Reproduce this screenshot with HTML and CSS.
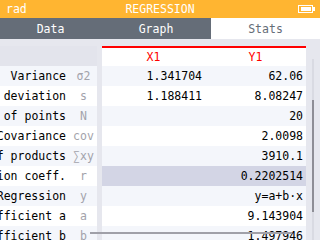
FILE: index.html
```html
<!DOCTYPE html>
<html lang="en">
<head>
  <meta charset="UTF-8" />
  <title>Regression</title>
  <link rel="stylesheet" href="styles.css">
</head>
<body>
  <div class="titlebar">
    <span class="unit">rad</span>
    <span class="title">REGRESSION</span>
    <span class="battery">
      <svg width="18" height="8" viewBox="0 0 18 8">
        <rect x="0.5" y="0.5" width="14" height="7" fill="none" stroke="#fff"/>
        <rect x="3" y="2" width="10" height="4" fill="#fff"/>
        <rect x="15" y="2" width="2" height="4" fill="#fff"/>
      </svg>
    </span>
  </div>

  <div class="tabs">
    <div class="tab tab-data">Data</div>
    <div class="tab tab-graph">Graph</div>
    <div class="tab tab-stats active">Stats</div>
  </div>

  <div class="content">
    <div class="labels">
      <div class="label-head"></div>
      <div class="lrow odd"><span class="name">Variance</span><span class="sym">σ2</span></div>
      <div class="lrow"><span class="name">Standard deviation</span><span class="sym">s</span></div>
      <div class="lrow odd"><span class="name">Number of points</span><span class="sym">N</span></div>
      <div class="lrow"><span class="name">Covariance</span><span class="sym">cov</span></div>
      <div class="lrow odd"><span class="name">Sum of products</span><span class="sym">∑xy</span></div>
      <div class="lrow"><span class="name">Correlation coeff.</span><span class="sym">r</span></div>
      <div class="lrow odd"><span class="name">Regression</span><span class="sym">y</span></div>
      <div class="lrow"><span class="name">Coefficient a</span><span class="sym">a</span></div>
      <div class="lrow odd"><span class="name">Coefficient b</span><span class="sym">b</span></div>
    </div>

    <div class="table">
      <div class="head">X1</div><div class="head">Y1</div>
      <div class="cell odd">1.341704</div><div class="cell odd">62.06</div>
      <div class="cell">1.188411</div><div class="cell">8.08247</div>
      <div class="cell odd"></div><div class="cell odd">20</div>
      <div class="cell"></div><div class="cell">2.0098</div>
      <div class="cell odd"></div><div class="cell odd">3910.1</div>
      <div class="cell selected"></div><div class="cell selected">0.2202514</div>
      <div class="cell odd"></div><div class="cell odd">y=a+b·x</div>
      <div class="cell"></div><div class="cell">9.143904</div>
      <div class="cell odd"></div><div class="cell odd">1.497946</div>
    </div>

    <div class="vscroll"><div class="vthumb"></div></div>
    <div class="hscroll"></div>
  </div>
</body>
</html>
```

FILE: styles.css
```css
body {
  margin: 0;
  width: 320px;
  height: 240px;
  overflow: hidden;
  font-family: "DejaVu Sans Mono", monospace;
  font-size: 11.5px;
  background: #e6e7ee;
}
.titlebar {
  height: 18px;
  background: #ffb531;
  color: #fff;
  display: grid;
  grid-template-columns: 1fr auto 1fr;
  align-items: center;
}
.unit {
  padding-left: 6px;
}
.battery {
  justify-self: end;
  padding-right: 4px;
  display: flex;
}
.tabs {
  height: 21px;
  background: #656d78;
  display: flex;
}
.tab {
  display: flex;
  align-items: center;
  justify-content: center;
  color: #fff;
}
.tab-data { width: 101px; }
.tab-graph { width: 110px; }
.tab-stats { width: 109px; }
.tab.active {
  background: #fff;
  color: #656d78;
}
.content {
  position: relative;
  height: 201px;
  padding-top: 7px;
  box-sizing: border-box;
  display: flex;
  gap: 5px;
  overflow: hidden;
}
.labels {
  width: 97px;
  flex: none;
}
.label-head {
  height: 20px;
  background: #e3e4ec;
}
.lrow {
  height: 20px;
  display: flex;
  justify-content: flex-end;
  align-items: center;
  overflow: hidden;
  white-space: nowrap;
  background: #fff;
  color: #000;
}
.lrow.odd,
.cell.odd {
  background: #f4f6fb;
}
.name {
  padding-right: 4px;
}
.sym {
  width: 27px;
  flex: none;
  text-align: center;
  color: #a3a3ab;
}
.table {
  width: 204px;
  flex: none;
  display: grid;
  grid-template-columns: 103px 101px;
  grid-auto-rows: 20px;
  grid-template-rows: 18px;
  border-top: 2px solid #ff0000;
  align-self: flex-start;
}
.head {
  background: #fff;
  color: #ff0000;
  text-align: center;
  line-height: 18px;
}
.cell {
  background: #fff;
  text-align: right;
  padding-right: 3px;
  line-height: 20px;
  white-space: nowrap;
}
.cell.selected {
  background: #d3d5e5;
}
.vscroll {
  position: absolute;
  left: 312px;
  top: 20px;
  width: 2px;
  height: 181px;
  background: #d9dae2;
}
.vthumb {
  margin-top: 41px;
  height: 112px;
  background: #8e8e96;
}
.hscroll {
  position: absolute;
  left: 90px;
  top: 193px;
  width: 202px;
  height: 2px;
  background: #a0a0a8;
}
```
